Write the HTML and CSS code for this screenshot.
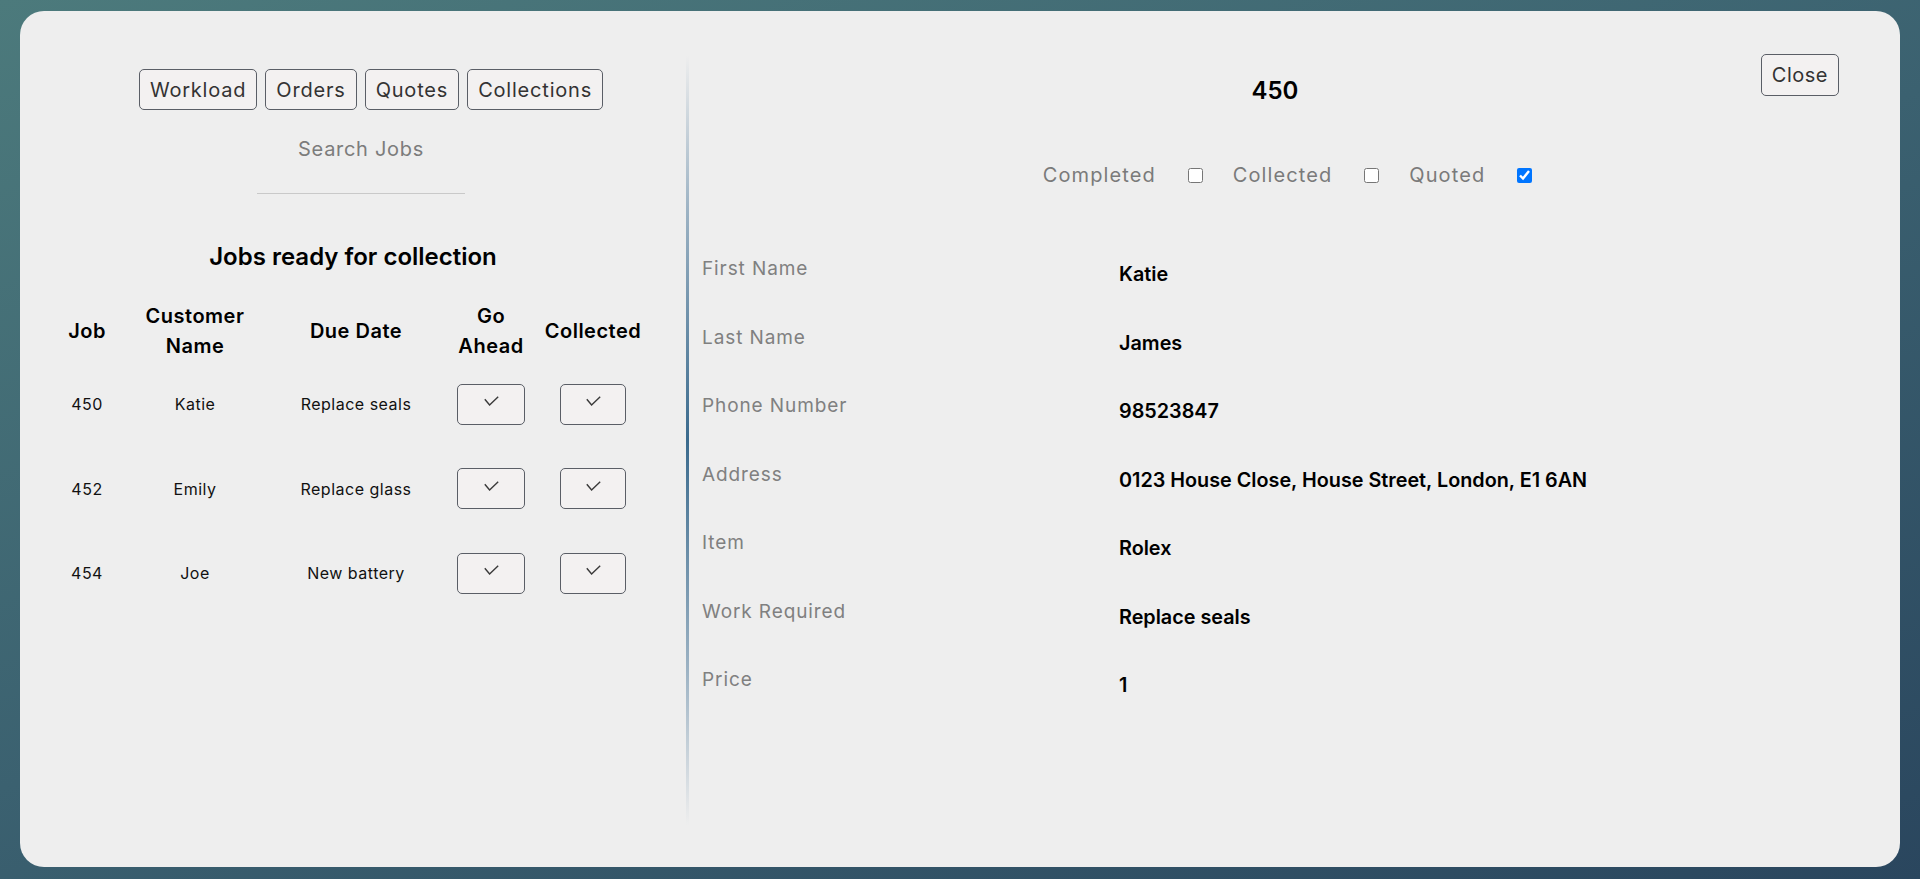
FILE: index.html
```html
<!DOCTYPE html>
<html lang="en">
<head>
<meta charset="utf-8">
<title>Jobs</title>
<link rel="stylesheet" href="styles.css">
</head>
<body>
<div class="card">
  <section class="left">
    <nav class="tabs">
      <button class="btn">Workload</button>
      <button class="btn">Orders</button>
      <button class="btn">Quotes</button>
      <button class="btn">Collections</button>
    </nav>
    <div class="search-wrap"><input class="search" type="text" placeholder="Search Jobs"></div>
    <h2 class="list-title">Jobs ready for collection</h2>
    <table class="jobs">
      <colgroup>
        <col class="c-job"><col class="c-name"><col class="c-date"><col class="c-go"><col class="c-col">
      </colgroup>
      <thead>
        <tr><th>Job</th><th>Customer<br>Name</th><th>Due Date</th><th>Go<br>Ahead</th><th>Collected</th></tr>
      </thead>
      <tbody>
        <tr>
          <td>450</td><td>Katie</td><td>Replace seals</td>
          <td><button class="tick go"><svg width="15" height="10" viewBox="0 0 15 10"><path d="M0.8 3.2 L5.6 9 L14.2 0.8" fill="none" stroke="#3a3a3a" stroke-width="1.4"/></svg></button></td>
          <td><button class="tick cl"><svg width="15" height="10" viewBox="0 0 15 10"><path d="M0.8 3.2 L5.6 9 L14.2 0.8" fill="none" stroke="#3a3a3a" stroke-width="1.4"/></svg></button></td>
        </tr>
        <tr>
          <td>452</td><td>Emily</td><td>Replace glass</td>
          <td><button class="tick go"><svg width="15" height="10" viewBox="0 0 15 10"><path d="M0.8 3.2 L5.6 9 L14.2 0.8" fill="none" stroke="#3a3a3a" stroke-width="1.4"/></svg></button></td>
          <td><button class="tick cl"><svg width="15" height="10" viewBox="0 0 15 10"><path d="M0.8 3.2 L5.6 9 L14.2 0.8" fill="none" stroke="#3a3a3a" stroke-width="1.4"/></svg></button></td>
        </tr>
        <tr>
          <td>454</td><td>Joe</td><td>New battery</td>
          <td><button class="tick go"><svg width="15" height="10" viewBox="0 0 15 10"><path d="M0.8 3.2 L5.6 9 L14.2 0.8" fill="none" stroke="#3a3a3a" stroke-width="1.4"/></svg></button></td>
          <td><button class="tick cl"><svg width="15" height="10" viewBox="0 0 15 10"><path d="M0.8 3.2 L5.6 9 L14.2 0.8" fill="none" stroke="#3a3a3a" stroke-width="1.4"/></svg></button></td>
        </tr>
      </tbody>
    </table>
  </section>
  <div class="divider"></div>
  <section class="right">
    <header class="detail-head">
      <span></span>
      <h1 class="job-no">450</h1>
      <button class="btn close">Close</button>
    </header>
    <div class="flags">
      <span class="flag">Completed</span><input type="checkbox">
      <span class="flag">Collected</span><input type="checkbox">
      <span class="flag">Quoted</span><input type="checkbox" checked>
    </div>
    <dl class="fields">
      <div class="field"><dt>First Name</dt><dd>Katie</dd></div>
      <div class="field"><dt>Last Name</dt><dd>James</dd></div>
      <div class="field"><dt>Phone Number</dt><dd>98523847</dd></div>
      <div class="field"><dt>Address</dt><dd>0123 House Close, House Street, London, E1 6AN</dd></div>
      <div class="field"><dt>Item</dt><dd>Rolex</dd></div>
      <div class="field"><dt>Work Required</dt><dd>Replace seals</dd></div>
      <div class="field"><dt>Price</dt><dd>1</dd></div>
    </dl>
  </section>
</div>
</body>
</html>
```

FILE: styles.css
```css
* { box-sizing: border-box; }

html, body {
  margin: 0;
  height: 100%;
}

body {
  font-family: "Inter", "Noto Sans", sans-serif;
  background: linear-gradient(160deg, #4c7a7c 0%, #3b6170 50%, #2a465e 100%);
  padding: 11px 20px 12px;
  overflow: hidden;
}

.card {
  height: 856px;
  background: #eeeeee;
  border-radius: 24px;
  display: flex;
}

/* ---------- left ---------- */
.left {
  width: 666px;
  flex: none;
  display: flex;
  flex-direction: column;
  align-items: center;
  padding-top: 58px;
}

.tabs {
  display: flex;
  gap: 8px;
  padding-left: 36px;
}

.btn {
  font-family: inherit;
  font-size: 20px;
  letter-spacing: 0.8px;
  color: #333;
  background: #f3f1f1;
  border: 1px solid #5a5e66;
  border-radius: 5px;
  height: 41px;
  padding: 0 10px;
  cursor: pointer;
}

.search-wrap {
  padding-left: 16px;
  margin-top: 18px;
}

.search {
  width: 208px;
  height: 66px;
  padding: 0 0 23px;
  border: none;
  border-bottom: 1px solid #c9c9c9;
  background: transparent;
  font-family: inherit;
  font-size: 20px;
  letter-spacing: 0.7px;
  text-align: center;
  outline: none;
}

.search::placeholder { color: #7c7c7c; }

.list-title {
  margin: 45px 0 0;
  font-size: 24px;
  line-height: 36px;
  font-weight: 600;
  color: #000;
}

.jobs {
  margin: 26px 6px 0 0;
  border-collapse: collapse;
  table-layout: fixed;
  width: 590px;
  text-align: center;
}

.c-job { width: 64px; }
.c-name { width: 152px; }
.c-date { width: 170px; }
.c-go { width: 100px; }
.c-col { width: 104px; }

.jobs th {
  font-size: 20px;
  font-weight: 600;
  line-height: 30px;
  letter-spacing: 0.5px;
  height: 60px;
  padding: 0;
  color: #000;
}

.jobs td {
  font-size: 16px;
  letter-spacing: 0.5px;
  color: #111;
  height: 84.5px;
  padding: 2px 0 0;
  vertical-align: middle;
}

.tick {
  height: 41px;
  width: 68px;
  background: #f3f1f1;
  border: 1px solid #5a5e66;
  border-radius: 5px;
  padding: 0 0 6px;
  display: inline-flex;
  align-items: center;
  justify-content: center;
}

.tick.cl { width: 66px; }

/* ---------- divider ---------- */
.divider {
  width: 3px;
  flex: none;
  margin: 44px 0 42px;
  background: linear-gradient(to bottom, rgba(59,107,142,0) 0%, #9db3c4 20%, #3a6a8d 50%, #9db3c4 80%, rgba(59,107,142,0) 100%);
}

/* ---------- right ---------- */
.right {
  flex: 1;
  padding: 43px 61px 0 13px;
}

.detail-head {
  display: grid;
  grid-template-columns: 1fr auto 1fr;
  align-items: start;
}

.job-no {
  margin: 19px 0 0 9px;
  font-size: 24px;
  line-height: 36px;
  font-weight: 600;
  color: #000;
}

.close {
  justify-self: end;
  height: 42px;
  padding: 0 10px;
  letter-spacing: 0.5px;
}

.flags {
  margin-top: 51px;
  display: flex;
  justify-content: center;
  align-items: center;
  padding-left: 34px;
}

.flag {
  font-size: 20px;
  line-height: 30px;
  letter-spacing: 1.1px;
  color: #7a7a7a;
  margin-right: 32px;
}

.flags input {
  margin: 0 30px 0 0;
  width: 15px;
  height: 15px;
}

.flags input:last-child { margin-right: 0; }

.fields {
  margin: 64px 0 0;
}

.field {
  display: grid;
  grid-template-columns: 417px 1fr;
  height: 68.5px;
}

.field dt {
  font-size: 19px;
  line-height: 30px;
  letter-spacing: 0.9px;
  color: #808080;
}

.field dd {
  margin: 5px 0 0;
  font-size: 19.8px;
  line-height: 30px;
  font-weight: 600;
  color: #000;
}
```
